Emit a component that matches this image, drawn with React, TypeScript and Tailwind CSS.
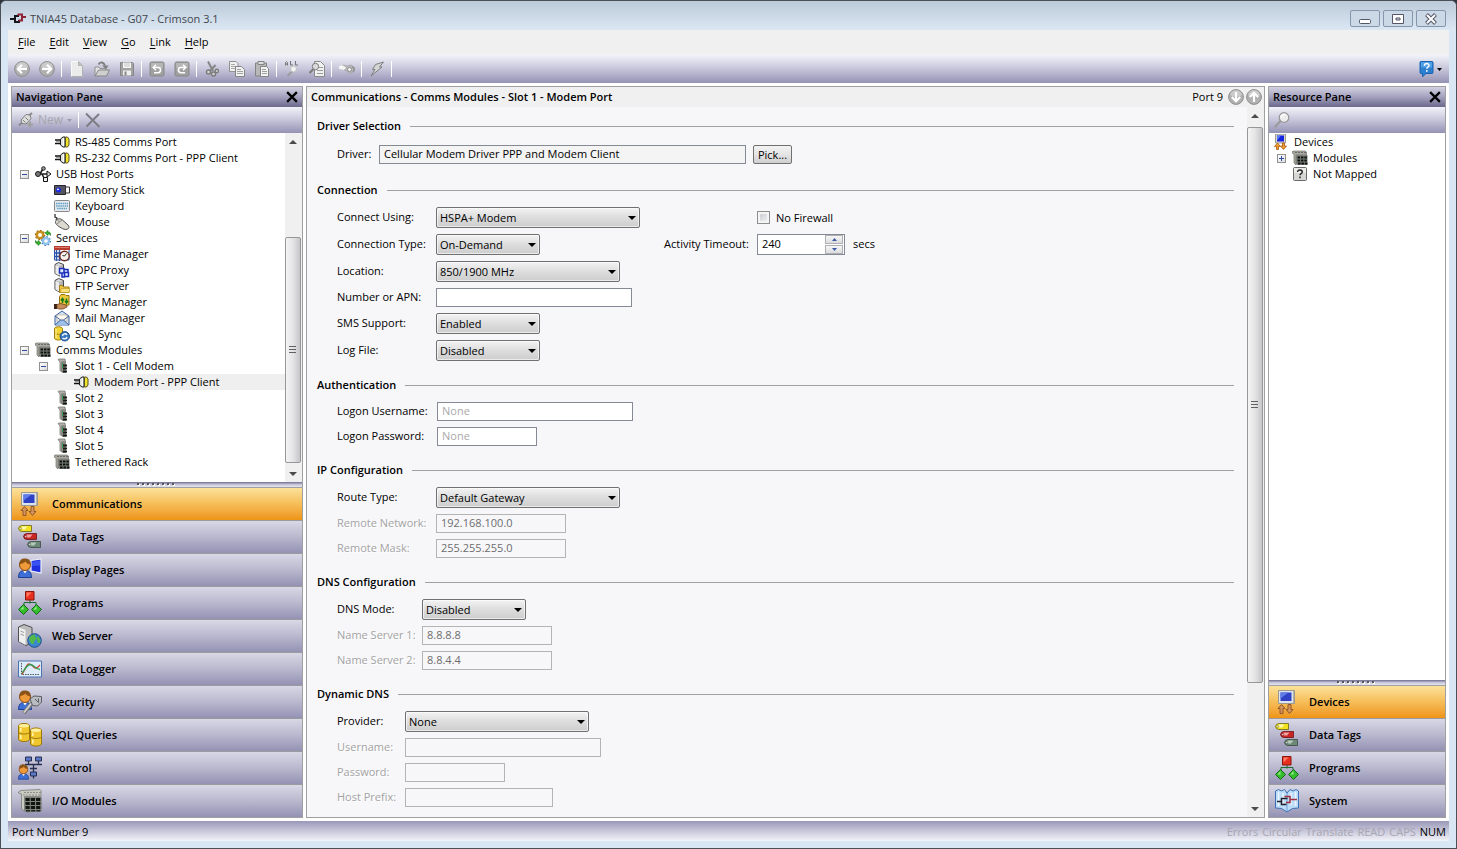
import { Fragment, useState } from "react";
import type { ReactNode } from "react";

/* ---------- 16px toolbar icons ---------- */

function Svg16({ children, size = "size-4" }: { children: ReactNode; size?: string }) {
  return (
    <svg viewBox="0 0 16 16" className={`${size} shrink-0`} aria-hidden="true">
      {children}
    </svg>
  );
}

function RoundArrow({ angle }: { angle: number }) {
  return (
    <Svg16>
      <circle cx="8" cy="8" r="7.4" fill="#b0b0b0" stroke="#8f8f8f" strokeWidth="1" />
      <path d="M2 6a6.2 6.2 0 0 1 12 0c-3 2-8 2-12 0z" fill="#cbcbcb" />
      <g transform={`rotate(${angle} 8 8)`} fill="none" stroke="#fff" strokeWidth="2.200">
        <path d="M13 8H5" />
        <path d="M8 3.800L3.800 8L8 12.200" />
      </g>
    </Svg16>
  );
}

const IconNew = () => (
  <Svg16>
    <path d="M2.500 .5h7l4 4v11h-11z" fill="#ebebeb" stroke="#fafafa" />
    <path d="M13.500 5v10.500h-11" fill="none" stroke="#b0b0b0" />
    <path d="M9.500.5v4h4z" fill="#bdbdbd" stroke="#a0a0a0" strokeWidth=".6" />
  </Svg16>
);
const IconOpen = () => (
  <Svg16>
    <path d="M1 15V6h4l1 1.500h6V9" fill="#e2e2e2" stroke="#8e8e8e" />
    <path d="M1 15l3.500-6H15.500l-3 6z" fill="#cfcfcf" stroke="#858585" />
    <path d="M4.500 3.500C6 .5 9.500 .8 11 4.500" fill="none" stroke="#7d7d7d" strokeWidth="1.800" />
    <path d="M8 4.500h6.500L12 8z" fill="#7d7d7d" />
  </Svg16>
);
const IconSave = () => (
  <Svg16>
    <path d="M1.500 1.500h12l1 1v12h-13z" fill="#a3a3a3" stroke="#868686" />
    <path d="M4 1.500h8v5.500H4z" fill="#f8f8f8" />
    <path d="M5 3h6M5 5h6" stroke="#c2c2c2" />
    <path d="M4 9.500h8v5H4z" fill="#eee" />
    <path d="M5.500 10.500h2v4h-2z" fill="#888" />
  </Svg16>
);
function IconUndo({ flip = false }: { flip?: boolean }) {
  return (
    <Svg16>
      <rect x="1" y="1" width="14" height="14" rx="1.500" fill="#a0a0a0" stroke="#868686" />
      <path d="M2 2h12v5H2z" fill="#b6b6b6" />
      <g transform={flip ? "translate(16 0) scale(-1 1)" : undefined} fill="none" stroke="#fff" strokeWidth="1.600">
        <path d="M5 6.500h4a2.600 2.600 0 0 1 0 5.200H5" />
        <path d="M7 3.700L4.300 6.500L7 9.300" />
      </g>
    </Svg16>
  );
}
const IconCut = () => (
  <Svg16>
    <path d="M4 .5l5 9.500M11.500 4L6 10" stroke="#858585" strokeWidth="2" />
    <circle cx="4.500" cy="11" r="2" fill="#d5d5d5" stroke="#7b7b7b" strokeWidth="1.400" />
    <circle cx="9.500" cy="13" r="2" fill="#d5d5d5" stroke="#7b7b7b" strokeWidth="1.400" />
    <circle cx="12.800" cy="10" r="1.700" fill="#d5d5d5" stroke="#7b7b7b" strokeWidth="1.400" />
  </Svg16>
);
const IconCopy = () => (
  <Svg16>
    <path d="M.5.500H7l2 2v8H.5z" fill="#f1f1f1" stroke="#919191" />
    <path d="M2 3.500h4M2 5.500h5M2 7.500h5" stroke="#aaa" />
    <path d="M6.500 5.500h6l3 3v7h-9z" fill="#f1f1f1" stroke="#868686" />
    <path d="M8 8.500h4M8 10.500h6M8 12.500h6" stroke="#a0a0a0" />
  </Svg16>
);
const IconPaste = () => (
  <Svg16>
    <path d="M1.500 2h11v13h-11z" fill="#b8b8b8" stroke="#838383" />
    <path d="M4 .5h6v3H4z" fill="#dedede" stroke="#848484" />
    <path d="M6.500 5.500h6l2 2v8h-8z" fill="#f3f3f3" stroke="#868686" />
    <path d="M8 8.500h4M8 10.500h5M8 12.500h5" stroke="#a0a0a0" />
  </Svg16>
);
const IconFindAll = () => (
  <Svg16>
    <path d="M1.500 4.500V1.500L2.500 .5L3.500 1.500V4.500M1.500 3h2M6.500 0v4H9M11.500 0v4H14" fill="none" stroke="#757575" />
    <path d="M3.500 15L8 10.500" stroke="#9c9c9c" strokeWidth="2" />
    <circle cx="9.500" cy="8" r="3" fill="#f2f2f2" stroke="#c0c0c0" />
  </Svg16>
);
const IconFindDoc = () => (
  <Svg16>
    <path d="M5.500 .5h6l4 4v11h-10z" fill="#f0f0f0" stroke="#8a8a8a" />
    <path d="M9 6.500h5M8 9.500h6M8 12.500h6" stroke="#9a9a9a" />
    <path d="M.5 12l4-4" stroke="#7c7c7c" strokeWidth="2.200" />
    <circle cx="6.500" cy="5.500" r="3.200" fill="#dadada" stroke="#7c7c7c" />
  </Svg16>
);
const IconHand = () => (
  <Svg16>
    <path d="M0 5.500l4-1.500 4 1 4-1 4 3v3l-3 1.500-3 1-3-3-3-1-4-1z" fill="#b9b9b9" stroke="#9a9a9a" strokeWidth=".6" />
    <path d="M0 5l3-1 4 2.500-2 2.500-5-1z" fill="#f5f5f5" />
    <circle cx="10.500" cy="8.500" r="2" fill="#f2f2f2" stroke="#8c8c8c" />
    <path d="M13 5.500l2.500 2.500-1.500 3" fill="none" stroke="#8f8f8f" strokeWidth="1.300" />
  </Svg16>
);
const IconBolt = () => (
  <Svg16>
    <path d="M6.500 3.500L14.500 1L10.500 6H13L2 15L6 8.500H3.500z" fill="#d6d6d6" stroke="#7e7e7e" />
  </Svg16>
);
const IconHelp = () => (
  <Svg16>
    <path d="M2 .5h11q1 0 1 1v10q0 1-1 1H7L3.500 15.800V12.500H2q-1 0-1-1v-10q0-1 1-1z" fill="#2d7fd0" stroke="#1b62b0" />
    <path d="M2 1h11v5.500H2z" fill="#53a0e4" />
    <path d="M5.500 4.800c0-3 4.500-2.800 4.500-.3 0 1.600-2.200 1.600-2.200 3.300M7.800 9v1.800" fill="none" stroke="#fff" strokeWidth="1.500" />
  </Svg16>
);
const IconPlugNew = () => (
  <Svg16>
    <path d="M1 13.500l3-3M11 3.500L14 1" stroke="#888" strokeWidth="1.800" />
    <path d="M3 8l5-5.500 4 .5 1 3.500L8 12l-4-.5z" fill="#dcdcdc" stroke="#808080" />
    <path d="M5 8l2.500 2.500M7.500 5.500L10 8" stroke="#808080" />
    <path d="M12 9.500v6M9 12.500h6" stroke="#a0a0a0" strokeWidth="2" />
  </Svg16>
);
const IconDelete = () => (
  <Svg16>
    <path d="M1 1.500L14.500 15M14 2L1.500 14.500" stroke="#7c7c85" strokeWidth="1.900" />
  </Svg16>
);
const IconMagnifier = () => (
  <Svg16>
    <path d="M.8 15.200L6.500 9" stroke="#9a9a9a" strokeWidth="2.200" />
    <circle cx="10" cy="5.500" r="4.800" fill="#ededed" stroke="#959595" strokeWidth="1.200" />
    <path d="M7.200 5.500C7.500 3.500 9 2.500 11 2.800" fill="none" stroke="#fff" strokeWidth="1.400" />
  </Svg16>
);
const IconClose = () => (
  <Svg16 size="size-3">
    <path d="M1.500 1.500L14.500 14.500M14.500 1.500L1.500 14.500" stroke="#000" strokeWidth="3" />
  </Svg16>
);
const IconApp = () => (
  <Svg16>
    <path d="M0 8h4M9 5H5v6h4V9" fill="none" stroke="#16161c" strokeWidth="2" />
    <path d="M7.500 3.500H12v6H8.500M12 6h4" fill="none" stroke="#8e2435" strokeWidth="2" />
  </Svg16>
);

/* ---------- 16px tree icons ---------- */

const IconPort = () => (
  <Svg16>
    <path d="M1 6h6M1 9.500h6" stroke="#111" strokeWidth="1.500" />
    <path d="M2 7.700h4" stroke="#888" />
    <path d="M6.500 5L9 3h2v10H9L6.500 11z" fill="#e2e2dc" stroke="#1b1b1b" />
    <path d="M11.500 3H13.500l1.500 2v6l-1.500 2h-2z" fill="#f0e32c" stroke="#555025" />
    <path d="M9.500 4v8" stroke="#fff" />
  </Svg16>
);
const IconUsb = () => (
  <Svg16>
    <path d="M3 8h10M5 8l3-5.500h1M7 8l2.500 5" fill="none" stroke="#222" strokeWidth="1.600" />
    <circle cx="3" cy="8" r="2.500" fill="#777" stroke="#1c1c1c" />
    <path d="M12 5l4 3-4 3z" fill="#ddd" stroke="#111" />
    <circle cx="8.500" cy="2.500" r="1.800" fill="#999" stroke="#222" />
    <path d="M8.500 11.500h4v4h-4z" fill="#eee" stroke="#111" />
  </Svg16>
);
const IconStick = () => (
  <Svg16>
    <path d="M.5 3.500h11v9H.5z" fill="#55555f" stroke="#22222a" />
    <circle cx="4.500" cy="8" r="2.500" fill="#1a28e8" />
    <circle cx="4" cy="7.300" r=".9" fill="#fff" />
    <path d="M11.500 5h4v6h-4z" fill="#f6f6f6" stroke="#333" />
  </Svg16>
);
const IconKeyboard = () => (
  <Svg16>
    <rect x=".5" y="2.500" width="15" height="11" rx="1" fill="#e6e9ec" stroke="#85898d" />
    <path d="M2 5.500h12M2 8h12M3 10.500h10" stroke="#62a3cc" strokeWidth="1.700" strokeDasharray="1.600 .6" />
  </Svg16>
);
const IconMouse = () => (
  <Svg16>
    <path d="M1 0v3l2 1L2 6" fill="none" stroke="#333" strokeWidth="1.300" />
    <path d="M2 6.500C4 4 7 4.500 9 6.500l5 4.500c2 2 .5 4-1 4.300-2 .5-4-.3-6-1.500C4 12 0 9.500 2 6.500z" fill="#dbd9d0" stroke="#4a4a46" />
    <path d="M3 10l5-4M5.500 8L3.500 6" fill="none" stroke="#888" />
  </Svg16>
);
const IconServices = () => (
  <Svg16>
    <circle cx="5" cy="5" r="3.300" fill="#fff" stroke="#c88f1d" strokeWidth="2.600" />
    <circle cx="5" cy="5" r="4.700" fill="none" stroke="#9a6a10" strokeWidth="1.200" strokeDasharray="1.600 2" />
    <circle cx="11" cy="11" r="3" fill="#fff" stroke="#8fc3ec" strokeWidth="2.400" />
    <circle cx="11" cy="11" r="4.500" fill="none" stroke="#3f80b8" strokeWidth="1.100" strokeDasharray="1.500 2" />
    <path d="M10 3l3-2.500V2c2 0 3 1 2.500 3.500C15 4 14 4 13 4v1.500z" fill="#37b02c" stroke="#147a12" strokeWidth=".6" />
    <path d="M6 13l-3 2.500V14c-2 0-3-1-2.500-3.500C1 12 2 12 3 12v-1.500z" fill="#37b02c" stroke="#147a12" strokeWidth=".6" />
  </Svg16>
);
const IconTime = () => (
  <Svg16>
    <path d="M.5 1h14.500v13H.5z" fill="#fff" stroke="#2b53a8" />
    <path d="M0 0h16v4H0z" fill="#b83a2c" />
    <path d="M1 1.500h14" stroke="#dc7a68" />
    <path d="M0 7h8M0 10.500h8M2.500 4v11M5.500 4v11" stroke="#2b53a8" strokeWidth="1.400" />
    <circle cx="10.500" cy="10" r="4.700" fill="#f5f3ee" stroke="#6e2b22" strokeWidth="1.400" />
    <path d="M10.500 10l2-2.500M10.500 10l-2-.5" stroke="#222" />
  </Svg16>
);
const ServerBody = () => (
  <>
    <path d="M1 2.500L4.500 .5 9.500 2.500v9l-4 2.500L1 11.500z" fill="#b4b4b4" stroke="#444" />
    <path d="M1.500 3L5 4.500v9L1.500 11.500z" fill="#ececec" />
    <path d="M2 2.500L4.500 1.300 8.500 2.800 5.500 4z" fill="#dcdcdc" />
  </>
);
const IconOpc = () => (
  <Svg16>
    <ServerBody />
    <path d="M6 7h9v8H6z" fill="#dfe6ff" />
    <path d="M5.500 6.500h4.500v4.500H5.500zM10.500 10.500h4v4h-4zM10 7.500h4v3M8 11v4h3" fill="none" stroke="#1a2fb8" strokeWidth="1.500" />
  </Svg16>
);
const IconFtp = () => (
  <Svg16>
    <ServerBody />
    <path d="M5.500 14.500V7.500h3l1 1.500h5.500v5.500z" fill="#ecc843" stroke="#a67d16" />
    <path d="M6 14.500l1.500-4H16l-1 4z" fill="#fbe07a" stroke="#b48d1f" strokeWidth=".6" />
  </Svg16>
);
const IconSync = () => (
  <Svg16>
    <path d="M5.500 11V2.500L7 .5h4l1 1h3v9.500z" fill="#eec93c" stroke="#96700f" />
    <path d="M8.500 9V5M7 6.500L8.500 4.500L10 6.500M12.500 4.500v4M11 7l1.500 2L14 7" fill="none" stroke="#137a1a" strokeWidth="1.500" />
    <path d="M0 10h3v5H0z" fill="#3d2315" />
    <path d="M3 10.500l4-1 6 2v1.500l-4 2H5l-2-1z" fill="#c98d57" stroke="#6f4420" strokeWidth=".8" />
  </Svg16>
);
const IconMail = () => (
  <Svg16>
    <path d="M1 6l7-5 7 5v9H1z" fill="#cfe2f7" stroke="#44639a" />
    <path d="M3 5h10v6H3z" fill="#fffaf0" stroke="#b5a98b" strokeWidth=".6" />
    <path d="M1 15l5.500-5h3l5.500 5" fill="#9dc0ea" stroke="#44639a" />
    <path d="M1 6l5.500 4M15 6L9.500 10" fill="none" stroke="#44639a" />
  </Svg16>
);
const IconSql = () => (
  <Svg16>
    <path d="M.5 2.500C1 .2 8 .2 8.500 2.500v10c-1 2-7 2-8 0z" fill="#f3d437" stroke="#9b7d10" />
    <path d="M1.500 7.500c1.500 1 4 1 6 .5" fill="none" stroke="#a78511" />
    <path d="M2 3v9" stroke="#fff3a3" />
    <circle cx="10.800" cy="10.300" r="4.700" fill="#3a7bc0" stroke="#1c4a86" />
    <path d="M8.500 10a2.500 2.500 0 0 1 4.500-1.200M13 11a2.500 2.500 0 0 1-4.500.8" fill="none" stroke="#fff" strokeWidth="1.400" />
  </Svg16>
);
const IconRack = () => (
  <Svg16>
    <path d="M0 2L1 1h12l1.500 1v3H4v10L2 13V4L0 3z" fill="#a9a8a1" stroke="#73726b" strokeWidth=".7" />
    <path d="M3 2.500h11" stroke="#6b6a64" strokeDasharray="2 1" />
    <path d="M4 5h11.500v10H5.500L4 14z" fill="#7d807a" />
    <path d="M5.500 7.500H15.500M5.500 10.500H15.500M6 13.500H15.500" stroke="#0d120e" strokeWidth="2.200" strokeDasharray="2.600 .8" />
  </Svg16>
);
const IconSlot = () => (
  <Svg16>
    <path d="M4 1.500L5 1h6l.5 3H7.500v10L6 12.500V4z" fill="#b0afa9" stroke="#7b7a74" strokeWidth=".8" />
    <path d="M7.500 3.500H12V15H8.500l-1-1z" fill="#85877f" />
    <path d="M9 6.500h4v2H9zM9 9.500h4v2H9zM9 12.500h4v2H9z" fill="#151a16" />
    <path d="M8.500 5v5" stroke="#2f9e4a" strokeWidth=".8" />
  </Svg16>
);
const IconUnmapped = () => (
  <Svg16>
    <rect x="1.500" y="1.500" width="13" height="13" rx="1" fill="#d6d6d2" stroke="#6a6a6a" />
    <path d="M2 2h12v5H2z" fill="#ebebe8" />
    <path d="M5.500 6c0-2.800 4.800-2.600 4.800 0 0 1.700-2.300 1.600-2.300 3.200M8 10.500v1.800" fill="none" stroke="#222" strokeWidth="1.400" />
  </Svg16>
);
const IconDevices16 = () => (
  <Svg16>
    <path d="M2.500 0h10v9h-10z" fill="#d8d6cc" stroke="#8b897e" strokeWidth=".8" />
    <path d="M4 1.500h7v6H4z" fill="#1424e0" />
    <path d="M4 1.500h4l-4 5z" fill="#5c7cff" />
    <path d="M3.500 15.500v-3h-2l3-3.500 3 3.500h-2v3zM9.500 9v3h-2l3 3.500 3-3.500h-2V9z" fill="#f19a2e" stroke="#a95a10" strokeWidth=".8" />
  </Svg16>
);

/* ---------- 24px category icons ---------- */

function Svg24({ children }: { children: ReactNode }) {
  return (
    <svg viewBox="0 0 24 24" className="size-6 shrink-0" aria-hidden="true">
      {children}
    </svg>
  );
}
const BigComms = () => (
  <Svg24>
    <path d="M3.500.500h16v13h-16z" fill="#dfe3ea" stroke="#9a9a95" />
    <path d="M5.500 2.500h11v8.500h-11z" fill="#2f42c6" />
    <path d="M5.500 2.500h8l-8 6z" fill="#5f7ce8" />
    <path d="M18.500 1v12" stroke="#b5b2a6" />
    <path d="M5 23.500v-5H3l3.500-4 3.500 4H8v5zM13 14.500v5h-2l3.500 4 3.500-4h-2v-5z" fill="#d6935a" stroke="#91592a" />
  </Svg24>
);
function Tag({ x, y, fill, hi, line }: { x: number; y: number; fill: string; hi: string; line: string }) {
  return (
    <g transform={`translate(${x} ${y})`}>
      <path d="M.5 3.500Q1 .5 4 .5h9.500v6H4Q1 6.500.5 3.500z" fill={fill} stroke={line} strokeWidth=".8" />
      <path d="M3.500 1.500h6L7 4.500H4z" fill={hi} />
      <circle cx="2.800" cy="3.500" r="1" fill="#fff" stroke={line} strokeWidth=".5" />
    </g>
  );
}
const BigTags = () => (
  <Svg24>
    <Tag x={0} y={0} fill="#f2e21e" hi="#fffab0" line="#6b640e" />
    <Tag x={5} y={8} fill="#c92525" hi="#f3a0a0" line="#6d1010" />
    <Tag x={9} y={16} fill="#6c8876" hi="#b5cbbd" line="#384a3f" />
  </Svg24>
);
const Person = () => (
  <>
    <path d="M.5 19.500C.5 14 3 12.500 7 12.500s6.500 1.500 6.500 7z" fill="#3d6fd6" stroke="#1d3f94" />
    <path d="M5 12.500l2 3 2-3z" fill="#fff" />
    <circle cx="7" cy="7" r="5.500" fill="#ee9a3a" stroke="#8a4b12" />
    <path d="M1.500 6.500C1 1 5 .3 7.500.5 12 .8 13 4 12.500 6.500 10 6 8 5 7.500 3.500 6 5 4 5.500 1.500 6.500z" fill="#8a5418" />
  </>
);
const BigDisplay = () => (
  <Svg24>
    <path d="M13 2.500l10-1.500v14l-10-2z" fill="#1f2fe0" stroke="#eef0f5" strokeWidth="1.200" />
    <path d="M14 4l8-1.500v5L14 8z" fill="#3a52f0" />
    <Person />
  </Svg24>
);
const BigPrograms = () => (
  <Svg24>
    <path d="M12 9v3.500M6 15v-3.500h12V15" fill="none" stroke="#1f6a34" />
    <path d="M7.500.5h8.500v8.500h-8.500z" fill="#e83020" stroke="#8a140b" />
    <path d="M8.500 1.500h5l-5 5z" fill="#ff7a62" />
    <path d="M5.500 13.500l5 5-5 5-5-5zM18.500 13.500l5 5-5 5-5-5z" fill="#35bd2d" stroke="#126b14" />
    <path d="M5.500 15l-3 3.500h3zM18.500 15l-3 3.500h3z" fill="#9aec8a" />
  </Svg24>
);
const BigWeb = () => (
  <Svg24>
    <path d="M.5 3L6 .5l8 3v15L8 21.500l-7.500-4z" fill="#bdbdbd" stroke="#4f4f4f" />
    <path d="M1 3.500L7.500 6v15L1 17.500z" fill="#efefef" />
    <path d="M2.500 7l3.500 1.500M2.500 10l3.500 1.500" stroke="#999" />
    <circle cx="16.500" cy="16.500" r="6.800" fill="#3b86d0" stroke="#1d4f8e" />
    <path d="M11 14c2-3 5-4 6-3.500s-1 2 1 3-1 2-1.500 3.500-1 4-2.500 3-3-3.500-3-6zM19 12c2 .5 3.500 3 3.500 5s-2.500 3-3 1.500.5-2-.5-3 .5-2 0-3.500z" fill="#53b84a" />
  </Svg24>
);
const BigLogger = () => (
  <Svg24>
    <path d="M.5 4h23v16H.5z" fill="#dcecfb" stroke="#4a73b2" />
    <path d="M3.500 6v11.500H22" fill="none" stroke="#555" strokeDasharray="1.500 1" />
    <path d="M4 17c3-3 4-10 7-10s4 3 6 4 3-1 5-3" fill="none" stroke="#d9433a" strokeWidth="1.300" />
    <path d="M4 16c3-4 5-8 8-8.500s6 5 10 5" fill="none" stroke="#2e9e53" strokeWidth="1.300" />
  </Svg24>
);
const BigSecurity = () => (
  <Svg24>
    <Person />
    <path d="M6 23l8-10" stroke="#777" strokeWidth="4" />
    <path d="M6 22.500l8-10" stroke="#cfcfcf" strokeWidth="2" />
    <path d="M12 9l4-3 7.500.500V12l-4 4-5-.5z" fill="#b9bcc0" stroke="#5a5d61" />
    <path d="M17 9l3.500 3.500M20.500 8.500v4" stroke="#5a5d61" />
  </Svg24>
);
function Cylinders({ x, y }: { x: number; y: number }) {
  return (
    <g transform={`translate(${x} ${y})`}>
      <path d="M.5 2.500C1.500-.2 10.500-.2 11.500 2.500v14c-1 2.700-10 2.700-11 0z" fill="#f1c730" stroke="#9b760d" />
      <ellipse cx="6" cy="2.700" rx="5" ry="1.700" fill="#fff0a0" />
      <path d="M.5 9.500c2 2 9 2 11 0" fill="none" stroke="#9b760d" />
      <path d="M2.800 5v3.500M2.800 12v4" stroke="#fff5b5" strokeWidth="1.500" />
    </g>
  );
}
const BigSql = () => (
  <Svg24>
    <Cylinders x={0} y={0} />
    <Cylinders x={12} y={4.500} />
  </Svg24>
);
const BigControl = () => (
  <Svg24>
    <path d="M7.500 1h6v4h-6zM17.500 1h6v4h-6zM12.500 16h6v4h-6z" fill="#5b78c8" stroke="#262f52" />
    <path d="M10.500 5v3M20.500 5v3M7 8.500h17M15.500 8.500V16M12 12.500h7M15.500 20v2.500" fill="none" stroke="#262f52" strokeWidth="1.300" />
    <g transform="translate(0 8) scale(.78)">
      <Person />
    </g>
  </Svg24>
);
const BigRack = () => (
  <Svg24>
    <path d="M.5 3L3 1.500l19-1 1 1v6H6.500V22L3.500 20V5L.5 4z" fill="#c9cbc2" stroke="#7a7c73" strokeWidth=".8" />
    <path d="M6 3.500h17M5 6h18" stroke="#8e9086" strokeWidth="1.200" strokeDasharray="2 1" />
    <path d="M6.500 8h17V22.500l-15 1-2-1.500z" fill="#7d827b" />
    <path d="M7.500 10.500H23.500M7.500 14.500H23.500M7.500 18.500H23.500" stroke="#10150f" strokeWidth="3.200" strokeDasharray="4.200 1.100" />
    <path d="M8 21.800H23.500" stroke="#20251f" strokeWidth="1.500" strokeDasharray="4 1.200" />
  </Svg24>
);
const BigSystem = () => (
  <Svg24>
    <path d="M.5 2l3-1.500 3 1.500 3-1.500L12 4l3-3.500 3 1.500 3-1.500L23.500 2v17l-6 .500L12 23 6.500 19.500.500 19z" fill="#bcdcf8" stroke="#3c6fb5" />
    <path d="M12 4v18" stroke="#6d9fd6" />
    <path d="M3.500 3v14M20.500 3v14M8 4v12M16 4v12" stroke="#eaf5ff" strokeWidth="1.500" />
    <path d="M2 12.500h4.500M12.500 9.500h-6v6h5" fill="none" stroke="#202028" strokeWidth="1.500" />
    <path d="M9.500 7.500h5.500v6h-4M15 10.500h7" fill="none" stroke="#a12f3e" strokeWidth="1.500" />
  </Svg24>
);

/* ---------- shared chrome ---------- */

const BAR = "bg-gradient-to-b from-[#f3f3fa] via-[#c6c5da] to-[#9593b4]";

function ToolButton({ label, children }: { label: string; children: ReactNode }) {
  return (
    <button type="button" aria-label={label} className="flex h-6 w-[25px] items-center justify-center">
      {children}
    </button>
  );
}
const ToolSep = () => (
  <span className="flex w-[5px] justify-center">
    <span className="h-4 w-px bg-white" />
  </span>
);

function PaneHeader({ title }: { title: string }) {
  return (
    <header className="flex h-5 shrink-0 items-center justify-between bg-gradient-to-b from-[#d3d2e2] via-[#a3a1bd] to-[#6b698c] pr-1 pl-1">
      <h2 className="font-semibold">{title}</h2>
      <button type="button" aria-label={`Close ${title}`}>
        <IconClose />
      </button>
    </header>
  );
}

type Node = { label: string; icon: () => ReactNode; level: number; open?: boolean; selected?: boolean };

const INDENT = ["pl-[3px]", "pl-[22px]", "pl-[41px]"];

function TreeRow({ node, root = false }: { node: Node; root?: boolean }) {
  const Icon = node.icon;
  return (
    <li
      className={`flex h-4 items-center ${root ? "pl-1" : INDENT[node.level]} ${node.selected ? "bg-[#efefef]" : ""}`}
    >
      {!root && (
        <span className="w-5 shrink-0 pl-[5px]">
          {node.open !== undefined && (
            <button
              type="button"
              aria-label={node.open ? `Collapse ${node.label}` : `Expand ${node.label}`}
              className="flex size-[9px] items-center justify-center border border-[#919191] bg-gradient-to-br from-white to-[#dcdcdc]"
            >
              <svg viewBox="0 0 5 5" className="size-[5px]" aria-hidden="true">
                <path d={node.open ? "M0 2.500h5" : "M0 2.500h5M2.500 0v5"} stroke="#2d4e9e" />
              </svg>
            </button>
          )}
        </span>
      )}
      <Icon />
      <span className="pl-[5px] whitespace-nowrap">{node.label}</span>
    </li>
  );
}

/* Track, thumb and remaining track share the height in the given ratio. */
function ScrollBar({ before, thumb, after }: { before: number; thumb: number; after: number }) {
  return (
    <div className="flex w-[17px] shrink-0 flex-col bg-[#f0f0f0] pr-px" aria-hidden="true">
      <svg viewBox="0 0 16 17" className="h-[17px] w-4 shrink-0">
        <path d="M4 11h8L8 7z" fill="#4a4a4a" />
      </svg>
      <div style={{ flex: `${before} 1 0` }} />
      <div
        className="flex items-center justify-center rounded-xs border border-[#979797] bg-gradient-to-r from-[#f4f4f4] via-[#e4e4e6] to-[#c6c6ca]"
        style={{ flex: `${thumb} 1 0` }}
      >
        <svg viewBox="0 0 8 8" className="size-2">
          <path d="M0 .5h7M0 3.500h7M0 6.500h7" stroke="#606060" />
        </svg>
      </div>
      <div style={{ flex: `${after} 1 0` }} />
      <svg viewBox="0 0 16 17" className="h-[17px] w-4 shrink-0">
        <path d="M4 7h8l-4 4z" fill="#4a4a4a" />
      </svg>
    </div>
  );
}

const Splitter = () => (
  <div className="flex h-1.5 shrink-0 items-start justify-center border-b border-[#a0a0a0] bg-gradient-to-b from-[#716f92] via-[#c4c3d8] to-[#e8e8f2]">
    <svg viewBox="0 0 40 4" className="h-1 w-10" aria-hidden="true">
      <path d="M0 3h38" stroke="#fff" strokeWidth="2" strokeDasharray="2 3" strokeDashoffset="-1" />
      <path d="M0 2h38" stroke="#555" strokeWidth="2" strokeDasharray="2 3" />
    </svg>
  </div>
);

type Category = { label: string; icon: () => ReactNode };

function CategoryList({ items, label }: { items: Category[]; label: string }) {
  const [active, setActive] = useState(0);
  return (
    <nav aria-label={label} className="flex flex-col divide-y divide-[#9a9a9f]">
      {items.map((item, i) => {
        const Icon = item.icon;
        const fill =
          i === active
            ? "from-[#fbe29a] via-[#f6bd56] to-[#ee9412]"
            : "from-[#d9d8e6] via-[#b9b8ce] to-[#9492b3]";
        return (
          <button
            key={item.label}
            type="button"
            onClick={() => setActive(i)}
            className={`flex h-[33px] items-center gap-[10px] bg-gradient-to-b pl-1.5 text-left font-semibold last:h-8 ${fill}`}
          >
            <Icon />
            {item.label}
          </button>
        );
      })}
    </nav>
  );
}

/* ---------- form pieces ---------- */

function Section({ title, cols, children }: { title: string; cols: string; children: ReactNode }) {
  return (
    <section>
      <div className="flex h-4 items-center gap-[9px]">
        <h3 className="font-semibold whitespace-nowrap">{title}</h3>
        <span className="h-px flex-1 bg-[#a0a0a0]" />
      </div>
      <div className={`mt-[9px] grid items-center gap-y-1.5 pl-5 ${cols}`}>{children}</div>
    </section>
  );
}

type FieldProps = { id: string; label: string; width: string };

function FieldLabel({ id, label, disabled = false }: { id: string; label: string; disabled?: boolean }) {
  return (
    <label
      htmlFor={id}
      className={`col-start-1 pb-0.5 whitespace-nowrap ${disabled ? "text-[#a3a3a3] [text-shadow:1px_1px_0_white]" : ""}`}
    >
      {label}
    </label>
  );
}

function SelectField({ id, label, width, value }: FieldProps & { value: string }) {
  return (
    <>
      <FieldLabel id={id} label={label} />
      <div className={`grid h-[21px] ${width}`}>
        <select
          id={id}
          defaultValue={value}
          className="col-start-1 row-start-1 w-full appearance-none rounded-xs border border-[#707070] bg-linear-to-b from-[#f3f3f3] from-0% via-[#dddddd] via-50% to-[#cdcdcd] pl-[3px] shadow-[inset_0_0_0_1px_rgba(255,255,255,0.6)]"
        >
          <option>{value}</option>
        </select>
        <svg
          viewBox="0 0 8 4"
          className="pointer-events-none col-start-1 row-start-1 mr-1 h-1 w-2 self-center justify-self-end"
          aria-hidden="true"
        >
          <path d="M0 0h8L4 4z" fill="#000" />
        </svg>
      </div>
    </>
  );
}

function TextField({
  id,
  label,
  width,
  value = "",
  placeholder,
  disabled = false,
  type = "text",
}: FieldProps & { value?: string; placeholder?: string; disabled?: boolean; type?: string }) {
  return (
    <>
      <FieldLabel id={id} label={label} disabled={disabled} />
      <input
        id={id}
        type={type}
        defaultValue={value}
        placeholder={placeholder}
        disabled={disabled}
        className={`h-[19px] border pb-0.5 pl-1 placeholder:text-[#a9a9a9] ${width} ${
          disabled ? "border-[#b4b4b4] bg-[#f7f7fa] text-[#6d6d6d]" : "border-[#858a96] bg-white"
        }`}
      />
    </>
  );
}

/* ---------- data ---------- */

const MENUS = ["File", "Edit", "View", "Go", "Link", "Help"];

const TOOLS: { label: string; icon: ReactNode }[][] = [
  [
    { label: "Back", icon: <RoundArrow angle={0} /> },
    { label: "Forward", icon: <RoundArrow angle={180} /> },
  ],
  [
    { label: "New", icon: <IconNew /> },
    { label: "Open", icon: <IconOpen /> },
    { label: "Save", icon: <IconSave /> },
  ],
  [
    { label: "Undo", icon: <IconUndo /> },
    { label: "Redo", icon: <IconUndo flip /> },
  ],
  [
    { label: "Cut", icon: <IconCut /> },
    { label: "Copy", icon: <IconCopy /> },
    { label: "Paste", icon: <IconPaste /> },
  ],
  [
    { label: "Find all", icon: <IconFindAll /> },
    { label: "Find in item", icon: <IconFindDoc /> },
  ],
  [{ label: "Watch", icon: <IconHand /> }],
  [{ label: "Download", icon: <IconBolt /> }],
];

const NAV_TREE: Node[] = [
  { label: "RS-485 Comms Port", icon: IconPort, level: 1 },
  { label: "RS-232 Comms Port - PPP Client", icon: IconPort, level: 1 },
  { label: "USB Host Ports", icon: IconUsb, level: 0, open: true },
  { label: "Memory Stick", icon: IconStick, level: 1 },
  { label: "Keyboard", icon: IconKeyboard, level: 1 },
  { label: "Mouse", icon: IconMouse, level: 1 },
  { label: "Services", icon: IconServices, level: 0, open: true },
  { label: "Time Manager", icon: IconTime, level: 1 },
  { label: "OPC Proxy", icon: IconOpc, level: 1 },
  { label: "FTP Server", icon: IconFtp, level: 1 },
  { label: "Sync Manager", icon: IconSync, level: 1 },
  { label: "Mail Manager", icon: IconMail, level: 1 },
  { label: "SQL Sync", icon: IconSql, level: 1 },
  { label: "Comms Modules", icon: IconRack, level: 0, open: true },
  { label: "Slot 1 - Cell Modem", icon: IconSlot, level: 1, open: true },
  { label: "Modem Port - PPP Client", icon: IconPort, level: 2, selected: true },
  { label: "Slot 2", icon: IconSlot, level: 1 },
  { label: "Slot 3", icon: IconSlot, level: 1 },
  { label: "Slot 4", icon: IconSlot, level: 1 },
  { label: "Slot 5", icon: IconSlot, level: 1 },
  { label: "Tethered Rack", icon: IconRack, level: 1 },
];

const NAV_CATEGORIES: Category[] = [
  { label: "Communications", icon: BigComms },
  { label: "Data Tags", icon: BigTags },
  { label: "Display Pages", icon: BigDisplay },
  { label: "Programs", icon: BigPrograms },
  { label: "Web Server", icon: BigWeb },
  { label: "Data Logger", icon: BigLogger },
  { label: "Security", icon: BigSecurity },
  { label: "SQL Queries", icon: BigSql },
  { label: "Control", icon: BigControl },
  { label: "I/O Modules", icon: BigRack },
];

const RES_CATEGORIES: Category[] = [
  { label: "Devices", icon: BigComms },
  { label: "Data Tags", icon: BigTags },
  { label: "Programs", icon: BigPrograms },
  { label: "System", icon: BigSystem },
];

const FLAGS = ["Errors", "Circular", "Translate", "READ", "CAPS"];

/* ---------- page parts ---------- */

function TitleBar() {
  const btn = "flex h-[17px] w-[30px] items-center justify-center rounded-xs border border-[#8396ae] bg-[#cbd8e6]";
  return (
    <div className="flex h-[29px] items-center justify-between rounded-t-md bg-gradient-to-b from-[#bccad9] to-[#dbe7f3] pr-[10px] pl-[9px]">
      <div className="flex items-center gap-1 pt-1.5 text-[#42464d]">
        <IconApp />
        <h1>TNIA45 Database - G07 - Crimson 3.1</h1>
      </div>
      <div className="flex gap-[3px] pt-1.5">
        <button type="button" aria-label="Minimize" className={btn}>
          <svg viewBox="0 0 12 12" className="size-3" aria-hidden="true">
            <rect x=".5" y="6.500" width="11" height="4" rx="1" fill="#fff" stroke="#535666" />
          </svg>
        </button>
        <button type="button" aria-label="Maximize" className={btn}>
          <svg viewBox="0 0 12 12" className="size-3" aria-hidden="true">
            <path d="M.5 1.500h11v9H.5zM4 5h4v2H4z" fill="#fff" fillRule="evenodd" stroke="#535666" />
          </svg>
        </button>
        <button type="button" aria-label="Close" className={btn}>
          <svg viewBox="0 0 12 12" className="size-3" aria-hidden="true">
            <path d="M1.500 1.500l9 9M10.500 1.500l-9 9" stroke="#535666" strokeWidth="4" />
            <path d="M2 2l8 8M10 2l-8 8" stroke="#fff" strokeWidth="2" />
          </svg>
        </button>
      </div>
    </div>
  );
}

function NavigationPane() {
  return (
    <aside className="flex w-[292px] shrink-0 flex-col border border-[#a0a0a0] bg-white">
      <PaneHeader title="Navigation Pane" />
      <div className={`flex h-[26px] shrink-0 items-center pl-1.5 text-[#a5a5ad] ${BAR}`}>
        <button type="button" className="flex items-center gap-1 text-xs">
          <IconPlugNew />
          New
          <svg viewBox="0 0 5 3" className="h-[3px] w-[5px]" aria-hidden="true">
            <path d="M0 0h5L2.500 3z" fill="#9a9aa2" />
          </svg>
        </button>
        <span className="mx-1.5 h-4 w-px bg-white" />
        <button type="button" aria-label="Delete">
          <IconDelete />
        </button>
      </div>
      <div className="flex flex-1">
        <ul className="flex-1 py-px">
          {NAV_TREE.map((node) => (
            <TreeRow key={node.label} node={node} />
          ))}
        </ul>
        <ScrollBar before={88} thumb={225} after={2} />
      </div>
      <Splitter />
      <CategoryList items={NAV_CATEGORIES} label="Categories" />
    </aside>
  );
}

function ResourcePane() {
  return (
    <aside className="flex w-[178px] shrink-0 flex-col border border-[#a0a0a0] bg-white">
      <PaneHeader title="Resource Pane" />
      <div className={`flex h-[26px] shrink-0 items-center pl-[5px] ${BAR}`}>
        <button type="button" aria-label="Search">
          <IconMagnifier />
        </button>
      </div>
      <ul className="flex-1 py-px">
        <TreeRow node={{ label: "Devices", icon: IconDevices16, level: 0 }} root />
        <TreeRow node={{ label: "Modules", icon: IconRack, level: 0, open: false }} />
        <TreeRow node={{ label: "Not Mapped", icon: IconUnmapped, level: 0 }} />
      </ul>
      <Splitter />
      <CategoryList items={RES_CATEGORIES} label="Resource categories" />
    </aside>
  );
}

function Editor() {
  return (
    <main className="flex min-w-0 flex-1 flex-col border border-[#a0a0a0] bg-[#f7f7fa]">
      <header className="flex h-5 shrink-0 items-center justify-between bg-[#f0f0f0] pr-0.5 pl-1">
        <h2 className="font-semibold">Communications - Comms Modules - Slot 1 - Modem Port</h2>
        <div className="flex items-center gap-0.5">
          <span className="pr-[3px]">Port 9</span>
          <button type="button" aria-label="Next item">
            <RoundArrow angle={270} />
          </button>
          <button type="button" aria-label="Previous item">
            <RoundArrow angle={90} />
          </button>
        </div>
      </header>
      <div className="flex flex-1">
        <form className="flex flex-1 flex-col gap-4 pt-[11px] pr-[13px] pb-[10px] pl-[10px]">
          <Section title="Driver Selection" cols="grid-cols-[42px_auto] py-0.5">
            <FieldLabel id="driver" label="Driver:" />
            <div className="flex gap-[7px]">
              <input
                id="driver"
                readOnly
                value="Cellular Modem Driver PPP and Modem Client"
                className="h-[19px] w-[367px] border border-[#858a96] bg-[#f4f4f4] pb-0.5 pl-1"
              />
              <button
                type="button"
                className="flex h-[19px] w-[39px] items-center justify-center rounded-xs border border-[#707070] bg-gradient-to-b from-[#f3f3f3] via-[#e4e4e4] to-[#cfcfcf]"
              >
                Pick...
              </button>
            </div>
          </Section>

          <Section title="Connection" cols="grid-cols-[99px_228px_93px_auto]">
            <SelectField id="using" label="Connect Using:" width="w-[204px]" value="HSPA+ Modem" />
            <label className="col-start-4 flex items-center gap-1.5">
              <input
                type="checkbox"
                className="size-[13px] appearance-none border border-[#8e8f8f] bg-linear-to-br from-[#c4c7ce] to-[#f6f6f6] shadow-[inset_0_0_0_2px_#f4f4f4] checked:bg-[#4a6fb5]"
              />
              No Firewall
            </label>
            <SelectField id="ctype" label="Connection Type:" width="w-[104px]" value="On-Demand" />
            <label htmlFor="timeout" className="pb-0.5 whitespace-nowrap">
              Activity Timeout:
            </label>
            <div className="flex items-center gap-2">
              <div className="flex h-[21px] w-[88px] border border-[#858a96] bg-white">
                <input id="timeout" type="text" defaultValue="240" className="w-[67px] pb-0.5 pl-1" />
                <div className="flex w-[18px] flex-col gap-px">
                  {["Increase", "Decrease"].map((name) => (
                    <button
                      key={name}
                      type="button"
                      aria-label={name}
                      className="flex h-[9px] items-center justify-center border border-[#b0b0b4] bg-gradient-to-b from-[#f6f6f6] to-[#dcdcde]"
                    >
                      <svg viewBox="0 0 5 3" className="h-[3px] w-[5px]" aria-hidden="true">
                        <path d={name === "Increase" ? "M0 3h5L2.500 0z" : "M0 0h5L2.500 3z"} fill="#3d59a5" />
                      </svg>
                    </button>
                  ))}
                </div>
              </div>
              <span className="pb-0.5">secs</span>
            </div>
            <SelectField id="location" label="Location:" width="w-[184px]" value="850/1900 MHz" />
            <TextField id="apn" label="Number or APN:" width="w-[196px]" />
            <SelectField id="sms" label="SMS Support:" width="w-[104px]" value="Enabled" />
            <SelectField id="log" label="Log File:" width="w-[104px]" value="Disabled" />
          </Section>

          <Section title="Authentication" cols="grid-cols-[100px_auto]">
            <TextField id="user" label="Logon Username:" width="w-[196px]" placeholder="None" />
            <TextField id="pass" label="Logon Password:" width="w-[100px]" placeholder="None" type="password" />
          </Section>

          <Section title="IP Configuration" cols="grid-cols-[99px_auto]">
            <SelectField id="route" label="Route Type:" width="w-[184px]" value="Default Gateway" />
            <TextField id="net" label="Remote Network:" width="w-[130px]" value="192.168.100.0" disabled />
            <TextField id="mask" label="Remote Mask:" width="w-[130px]" value="255.255.255.0" disabled />
          </Section>

          <Section title="DNS Configuration" cols="grid-cols-[85px_auto]">
            <SelectField id="dns" label="DNS Mode:" width="w-[104px]" value="Disabled" />
            <TextField id="ns1" label="Name Server 1:" width="w-[130px]" value="8.8.8.8" disabled />
            <TextField id="ns2" label="Name Server 2:" width="w-[130px]" value="8.8.4.4" disabled />
          </Section>

          <Section title="Dynamic DNS" cols="grid-cols-[68px_auto]">
            <SelectField id="provider" label="Provider:" width="w-[184px]" value="None" />
            <TextField id="duser" label="Username:" width="w-[196px]" disabled />
            <TextField id="dpass" label="Password:" width="w-[100px]" disabled type="password" />
            <TextField id="prefix" label="Host Prefix:" width="w-[148px]" disabled />
          </Section>
        </form>
        <ScrollBar before={3} thumb={556} after={117} />
      </div>
    </main>
  );
}

export default function App() {
  return (
    <div className="min-h-screen bg-[#30343c] font-['Open_Sans',sans-serif] text-[11px] leading-4 text-black">
      <div className="flex min-h-screen flex-col rounded-t-md border border-[#4b4f57] bg-[#d9e6f3]">
        <TitleBar />
        <div className="mx-[7px] mb-[7px] flex flex-1 flex-col bg-white">
          <nav aria-label="Menu" className="flex h-[25px] items-center gap-[14px] bg-[#f0f0f0] pb-0.5 pl-[10px]">
            {MENUS.map((name) => (
              <button key={name} type="button">
                <span className="underline underline-offset-2">{name[0]}</span>
                {name.slice(1)}
              </button>
            ))}
          </nav>
          <div className={`flex h-7 items-center justify-between pr-[7px] pl-px ${BAR}`}>
            <div className="flex items-center">
              {TOOLS.map((group) => (
                <Fragment key={group[0].label}>
                  {group.map((tool) => (
                    <ToolButton key={tool.label} label={tool.label}>
                      {tool.icon}
                    </ToolButton>
                  ))}
                  <ToolSep />
                </Fragment>
              ))}
            </div>
            <button type="button" aria-label="Help topics" className="flex items-center gap-0.5">
              <IconHelp />
              <svg viewBox="0 0 5 3" className="h-[3px] w-[5px]" aria-hidden="true">
                <path d="M0 0h5L2.500 3z" fill="#000" />
              </svg>
            </button>
          </div>
          <div className="flex flex-1 gap-[3px] p-[3px]">
            <NavigationPane />
            <Editor />
            <ResourcePane />
          </div>
          <footer className="flex h-5 items-center justify-between bg-gradient-to-b from-[#9a98b8] via-[#c8c7da] to-[#f3f3f9] pt-0.5 pr-[3px] pl-1">
            <span>Port Number 9</span>
            <div className="flex gap-1 text-[#a6a5b0]">
              {FLAGS.map((flag) => (
                <span key={flag}>{flag}</span>
              ))}
              <span className="text-black">NUM</span>
            </div>
          </footer>
        </div>
      </div>
    </div>
  );
}
